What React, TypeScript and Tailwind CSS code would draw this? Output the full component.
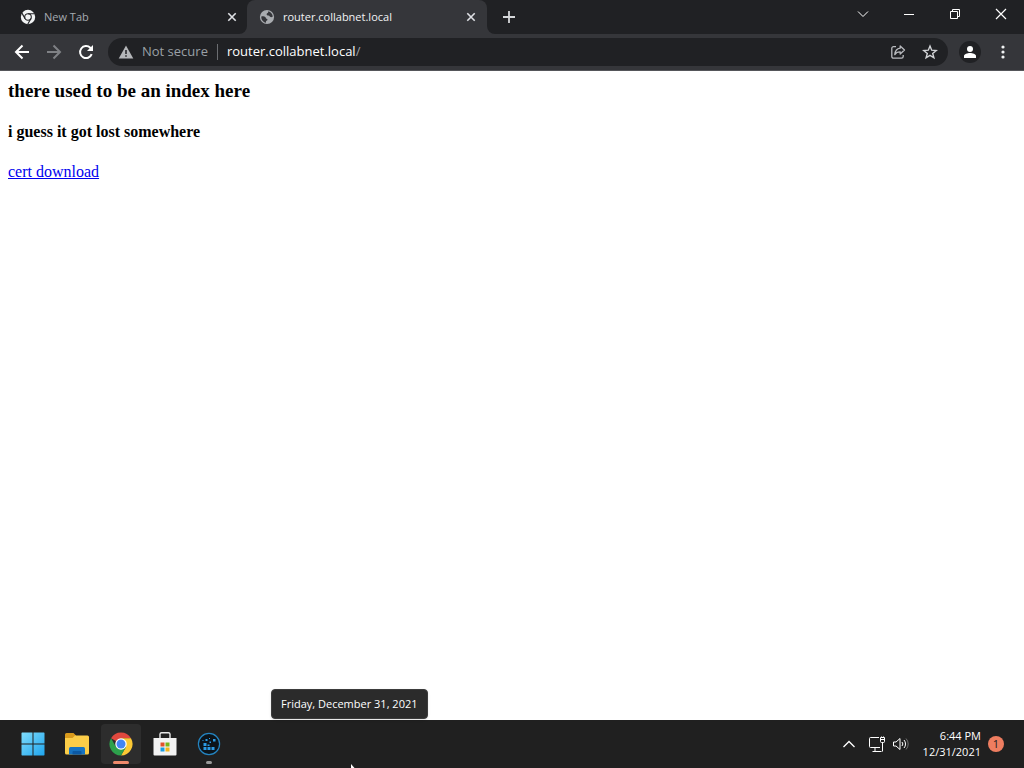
import React from "react";

type IconProps = { className?: string };

const ChromeMono: React.FC<IconProps> = ({ className }) => (
  <svg viewBox="0 0 16 16" className={className} aria-hidden="true">
    <circle cx="8" cy="8" r="7.2" fill="#f1f3f4" />
    <g stroke="#202124" strokeWidth="1.1" fill="none">
      <circle cx="8" cy="8" r="3.3" />
      <path d="M8 4.7h6.6M5.1 9.6 1.8 3.9M10.9 9.6l-3.3 5.8" />
    </g>
    <circle cx="8" cy="8" r="2.1" fill="#f1f3f4" />
  </svg>
);

const Globe: React.FC<IconProps> = ({ className }) => (
  <svg viewBox="0 0 16 16" className={className} aria-hidden="true">
    <circle cx="8" cy="8" r="7.1" fill="#a9acb0" />
    <path
      d="M2.3 7.6c1.500-.6 3.300-.4 4.200.6.5.6.300 1.300 1 1.500.9.200 1.200.7.8 1.500-.300.6-1.200.5-1.300 1.200v1.400C4 13.300 2.100 10.600 2.300 7.600zM9.300 2.300c2.500.6 4.300 2.700 4.500 5.200-.9.8-2 .9-2.700.3-.6-.6-.5-1.400-1.600-1.400-1 0-1.900-.3-1.900-1.200 0-.8 1-.9 1.400-1.400.300-.4.1-1 .3-1.500z"
      fill="#35363a"
    />
  </svg>
);

const CloseIcon: React.FC<IconProps> = ({ className }) => (
  <svg viewBox="0 0 16 16" className={className} aria-hidden="true">
    <path d="m4.3 4.3 7.4 7.4m0-7.4-7.4 7.4" stroke="currentColor" strokeWidth="1.6" />
  </svg>
);

const Tab: React.FC<{ title: string; active?: boolean; icon: React.ReactNode }> = ({
  title,
  active,
  icon,
}) => (
  <div className={active ? "flex bg-[#202124]" : "flex rounded-br-lg bg-[#202124] pl-2"}>
    <div
      className={
        active
          ? "flex w-60 items-center rounded-t-lg bg-[#35363a] pr-2 pl-3 text-[#f1f3f4]"
          : "flex w-[239px] items-center pr-[7px] pl-3 text-[#a5abb1]"
      }
    >
      <button role="tab" aria-selected={!!active} className="flex min-w-0 flex-1 items-center gap-2 text-left">
        {icon}
        <span className="truncate text-[11px] leading-4">{title}</span>
      </button>
      <button aria-label={`Close ${title}`} className="text-[#dfe1e5]">
        <CloseIcon className="size-4" />
      </button>
    </div>
  </div>
);

const WindowButton: React.FC<{ label: string; children: React.ReactNode }> = ({ label, children }) => (
  <button aria-label={label} className="flex h-7 w-[46px] items-center justify-center text-white">
    <svg viewBox="0 0 12 12" className="size-3" fill="none" stroke="currentColor">
      {children}
    </svg>
  </button>
);

const TabStrip: React.FC = () => (
  <header className="flex h-[34px] bg-[#35363a]">
    <div role="tablist" className="flex">
      <Tab title="New Tab" icon={<ChromeMono className="size-4 shrink-0" />} />
      <Tab title="router.collabnet.local" active icon={<Globe className="size-4 shrink-0" />} />
    </div>
    <div className="flex flex-1 justify-between rounded-bl-lg bg-[#202124]">
      <button aria-label="New tab" className="ml-3 flex w-5 items-center justify-center text-[#d5d7da]">
        <svg viewBox="0 0 14 14" className="size-[14px]" stroke="currentColor" strokeWidth="1.8">
          <path d="M7 1v12M1 7h12" />
        </svg>
      </button>
      <div className="flex">
        <WindowButton label="Search tabs">
          <path d="m1 3.5 5 5 5-5" />
        </WindowButton>
        <WindowButton label="Minimize">
          <path d="M1 6.5h10" />
        </WindowButton>
        <WindowButton label="Restore">
          <path d="M1.5 3.5h7v7h-7zM3.5 3.5v-2h7v7h-2" />
        </WindowButton>
        <WindowButton label="Close">
          <path d="m1 1 10 10m0-10L1 11" strokeWidth="1.2" />
        </WindowButton>
      </div>
    </div>
  </header>
);

const Toolbar: React.FC = () => (
  <div className="flex h-[37px] items-center border-b border-[#55565a] bg-[#35363a] pr-[11px] pl-3">
    <div className="flex gap-3">
      <button aria-label="Back" className="text-white">
        <svg viewBox="0 0 20 20" className="size-5" fill="none" stroke="currentColor" strokeWidth="2">
          <path d="M17 10H4m6.5-6.5L4 10l6.5 6.5" />
        </svg>
      </button>
      <button aria-label="Forward" className="text-[#7f8185]">
        <svg viewBox="0 0 20 20" className="size-5" fill="none" stroke="currentColor" strokeWidth="2">
          <path d="M3 10h13M9.5 3.5 16 10l-6.5 6.5" />
        </svg>
      </button>
      <button aria-label="Reload" className="text-white">
        <svg viewBox="0 0 20 20" className="size-5" fill="none" stroke="currentColor" strokeWidth="2">
          <path d="M15.7 12.2A6 6 0 1 1 14.3 5.8L16 7.5" />
          <path d="M17 3v6h-6z" fill="currentColor" stroke="none" />
        </svg>
      </button>
    </div>
    <div className="ml-3 flex h-7 flex-1 items-center rounded-full bg-[#202124] px-[10px] text-[13px]">
      <button className="flex items-center gap-2 text-[#9aa0a6]">
        <svg viewBox="0 0 16 16" className="size-4" aria-hidden="true">
          <path d="M8 1.5 15.3 14.5H.7z" fill="#b4b6b9" />
          <path d="M8 6v4M8 11.2v1.6" stroke="#202124" strokeWidth="1.5" />
        </svg>
        <span>Not secure</span>
      </button>
      <span className="mx-[9px] h-4 w-px bg-[#6b6d71]" />
      <div role="textbox" aria-label="Address" className="flex-1 text-[#9aa0a6]">
        <span className="text-white">router.collabnet.local</span>/
      </div>
      <button aria-label="Share this page" className="text-[#b9bbbf]">
        <svg viewBox="0 0 16 16" className="size-4" fill="none" stroke="currentColor" strokeWidth="1.3">
          <path d="M6 2.600H3.500A1.700 1.700 0 0 0 1.800 4.300v8.200A1.700 1.700 0 0 0 3.500 14.200h8a1.700 1.700 0 0 0 1.700-1.700V11" />
          <path d="M10.200 2 14.500 6l-4.300 4V7.800C7.700 7.800 5.800 8.700 4.800 10.600 5.100 7.300 7 4.600 10.200 4.200z" strokeLinejoin="round" />
        </svg>
      </button>
      <button aria-label="Bookmark this tab" className="ml-4 text-[#d2d4d7]">
        <svg viewBox="0 0 16 16" className="size-4" fill="none" stroke="currentColor" strokeWidth="1.4">
          <path d="m8 2 1.7 4.200 4.500.3-3.500 2.900 1.200 4.400L8 11.400l-3.900 2.400 1.200-4.400-3.500-2.900 4.500-.3z" />
        </svg>
      </button>
    </div>
    <button
      aria-label="Profile"
      className="ml-[11px] flex size-[22px] items-center justify-center rounded-full bg-[#202124] text-white"
    >
      <svg viewBox="0 0 12 12" className="size-3" fill="currentColor">
        <circle cx="6" cy="3" r="3" />
        <path d="M0 12v-2c0-2 3.500-3 6-3s6 1 6 3v2z" />
      </svg>
    </button>
    <button aria-label="Menu" className="ml-3 flex w-5 justify-center text-[#f1f3f4]">
      <svg viewBox="0 0 4 14" className="h-[14px] w-1" fill="currentColor">
        <circle cx="2" cy="2" r="1.6" />
        <circle cx="2" cy="7" r="1.6" />
        <circle cx="2" cy="12" r="1.6" />
      </svg>
    </button>
  </div>
);

const StartIcon = () => (
  <svg viewBox="0 0 24 24" className="size-6">
    <defs>
      <linearGradient id="start" x1="0" y1="0" x2="1" y2="1">
        <stop offset="0" stopColor="#7fdcfb" />
        <stop offset="1" stopColor="#1fa5ee" />
      </linearGradient>
    </defs>
    <path
      d="M1 .5h10.5v11H.5V1zM12.500.5H23l.5.5v10.500h-11zM.5 12.500h11v11H1L.5 23zM12.500 12.500h11V23l-.5.5H12.500z"
      fill="url(#start)"
    />
  </svg>
);

const FolderIcon = () => (
  <svg viewBox="0 0 26 24" className="h-6 w-[26px]">
    <path d="M1 2.500a1.500 1.500 0 0 1 1.500-1.500H9.500l2.500 2.500V8H1z" fill="#d99a1c" />
    <path d="M1 6h7.500L11 3.500h12.500A1.500 1.500 0 0 1 25 5v16a1.500 1.500 0 0 1-1.500 1.500h-21A1.500 1.500 0 0 1 1 21z" fill="#fbcd48" />
    <path d="M5 22.500V16.500a1.500 1.500 0 0 1 1.500-1.500h13a1.500 1.500 0 0 1 1.500 1.500v6z" fill="#1673c2" />
    <path d="M8.500 22.500v-2.500a1 1 0 0 1 1-1h7a1 1 0 0 1 1 1v2.500z" fill="#0c59a4" />
  </svg>
);

const ChromeIcon = () => (
  <svg viewBox="0 0 24 24" className="size-6">
    <path d="M12 12 2.04 6.25A11.5 11.5 0 0 1 21.96 6.25H12z" fill="#e0483e" />
    <path d="M12 6.25h9.96A11.5 11.5 0 0 1 12 23.5l4.98-8.62z" fill="#fcc934" />
    <path d="M7.02 14.88 2.04 6.25A11.5 11.5 0 0 0 12 23.5l4.98-8.62z" fill="#2da14c" />
    <circle cx="12" cy="12" r="5.75" fill="#fff" />
    <circle cx="12" cy="12" r="4.5" fill="#4285f4" />
  </svg>
);

const StoreIcon = () => (
  <svg viewBox="0 0 24 24" className="size-6">
    <path d="M7 7V2A1.500 1.500 0 0 1 8.500.7h7A1.500 1.500 0 0 1 17 2v5" fill="none" stroke="#e8e8e8" strokeWidth="1.4" />
    <path d="M.5 6h23v16.500a1 1 0 0 1-1 1h-21a1 1 0 0 1-1-1z" fill="#f3f3f3" />
    <path d="M7.500 10.500h4v4h-4z" fill="#e2512b" />
    <path d="M12.500 10.500h4v4h-4z" fill="#7bb51a" />
    <path d="M7.500 15.500h4v4h-4z" fill="#1b9de2" />
    <path d="M12.500 15.500h4v4h-4z" fill="#f5b51b" />
  </svg>
);

const ClusterIcon = () => (
  <svg viewBox="0 0 24 24" className="size-6">
    <circle cx="12" cy="12" r="10.600" fill="#0c141b" stroke="#2484c0" strokeWidth="1.200" />
    <path
      d="M6.500 11h3v3h-3zM6.500 15h3v3h-3zM10.500 15h3v3h-3zM14.500 15h3v3h-3zM10.500 12.500h2v1.500h-2zM8.500 7h2v2h-2zM16 7h2.500v2.500H16zM12.500 9.500h1.500V11h-1.500zM5.500 8h1v1h-1zM12 6h1v1h-1z"
      fill="#2b9ae4"
    />
  </svg>
);

const TaskButton: React.FC<{ label: string; state?: "active" | "open"; children: React.ReactNode }> = ({
  label,
  state,
  children,
}) => (
  <button
    aria-label={label}
    className={
      state === "active"
        ? "relative flex size-10 items-center justify-center rounded bg-[#2d2d2d]"
        : "relative flex size-10 items-center justify-center rounded"
    }
  >
    {children}
    {state === "active" && <span className="absolute bottom-0 h-[3px] w-4 rounded-full bg-[#f08a6c]" />}
    {state === "open" && <span className="absolute bottom-0 h-[3px] w-[6px] rounded-full bg-[#9a9a9a]" />}
  </button>
);

const Taskbar: React.FC = () => (
  <footer className="relative flex h-12 items-center justify-between bg-[#202020] pr-5 pl-[13px] text-white">
    <div className="flex gap-1">
      <TaskButton label="Start">
        <StartIcon />
      </TaskButton>
      <TaskButton label="File Explorer">
        <FolderIcon />
      </TaskButton>
      <TaskButton label="Google Chrome" state="active">
        <ChromeIcon />
      </TaskButton>
      <TaskButton label="Microsoft Store">
        <StoreIcon />
      </TaskButton>
      <TaskButton label="CollabNet" state="open">
        <ClusterIcon />
      </TaskButton>
    </div>
    <div className="flex items-center">
      <button aria-label="Show hidden icons">
        <svg viewBox="0 0 14 14" className="size-[14px]" fill="none" stroke="currentColor" strokeWidth="1.3">
          <path d="m1.5 10 5.5-5.5L12.5 10" />
        </svg>
      </button>
      <button aria-label="Network and volume" className="ml-[13px] flex items-center gap-2">
        <svg viewBox="0 0 16 16" className="size-4" fill="none" stroke="currentColor">
          <path d="M10 1.5H1.5A1 1 0 0 0 .5 2.5v8a1 1 0 0 0 1 1H11M3.500 15.500h9M6 11.500v4M13.500 6.500v9" />
          <path d="M11.500 1.500h4v4a1 1 0 0 1-1 1h-2a1 1 0 0 1-1-1zM11.500 3.500h4M12.500.5v1M14.500.5v1" />
        </svg>
        <svg viewBox="0 0 16 16" className="size-4" fill="none" stroke="currentColor">
          <path d="M.5 6v4h2.500l4 3.500v-11L3 6z" strokeLinejoin="round" />
          <path d="M9 6a3 3 0 0 1 0 4M11 4a6 6 0 0 1 0 8" />
          <path d="M13 2.500a8 8 0 0 1 0 11" stroke="#6f6f6f" />
        </svg>
      </button>
      <button className="ml-[14px] flex items-center gap-[7px]">
        <span className="text-right text-[11px] leading-4">
          <time className="block">6:44 PM</time>
          <time className="block">12/31/2021</time>
        </span>
        <span className="flex size-4 items-center justify-center rounded-full bg-[#ee7d60] text-[11px] leading-4 text-[#202020]">
          1
        </span>
      </button>
    </div>
    <div
      role="tooltip"
      className="absolute bottom-full left-[271px] mb-px flex h-[30px] items-center rounded border border-[#3c3c3c] bg-[#2b2b2b] px-[9px] text-[11px] whitespace-nowrap shadow"
    >
      Friday, December 31, 2021
    </div>
    <svg viewBox="0 0 4 4" className="absolute bottom-0 left-[351px] size-1">
      <path d="M0 0v4h3.5z" fill="#fff" />
    </svg>
  </footer>
);

export default function App() {
  return (
    <div className="flex min-h-screen flex-col bg-white font-['Open_Sans','Noto_Sans',sans-serif]">
      <TabStrip />
      <Toolbar />
      <main className="flex-1 px-2 pt-[9px] font-['Liberation_Serif',serif] text-[16px] leading-5 text-black">
        <h3 className="mb-5 text-[19px] leading-[22px] font-bold">there used to be an index here</h3>
        <h4 className="mb-5 text-[16px] font-bold">i guess it got lost somewhere</h4>
        <a href="#cert" className="text-[#0000ee] underline">
          cert download
        </a>
      </main>
      <Taskbar />
    </div>
  );
}
